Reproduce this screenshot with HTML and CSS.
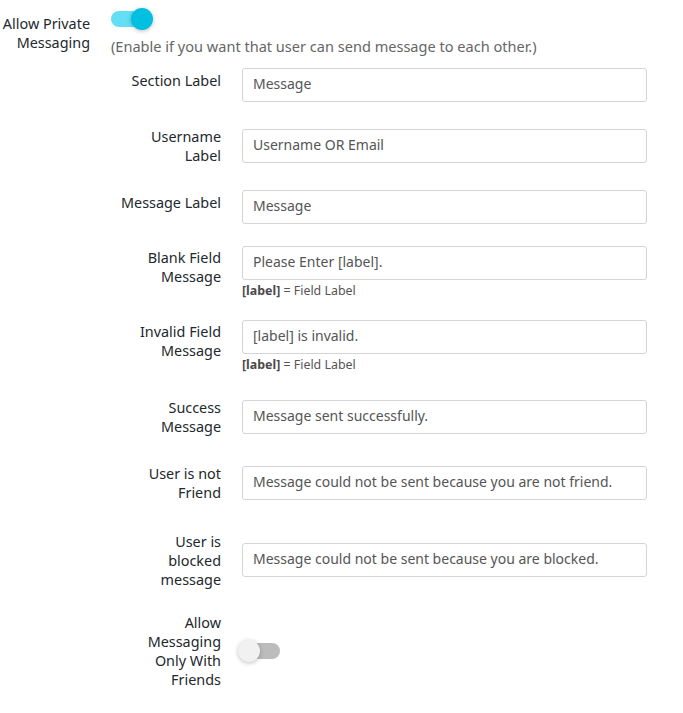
FILE: index.html
```html
<!DOCTYPE html>
<html lang="en">
<head>
<meta charset="utf-8">
<title>Private Messaging Settings</title>
<link rel="stylesheet" href="styles.css">
</head>
<body>
<div class="setting">
  <div class="setting-label">Allow Private Messaging</div>
  <div class="setting-body">
    <div class="toggle on"><span class="track"></span><span class="knob"></span></div>
    <p class="desc">(Enable if you want that user can send message to each other.)</p>

    <div class="fields">
      <div class="row">
        <label class="label">Section Label</label>
        <input class="input" type="text" value="Message">
      </div>
      <div class="row">
        <label class="label">Username Label</label>
        <input class="input" type="text" value="Username OR Email">
      </div>
      <div class="row gap-s">
        <label class="label">Message Label</label>
        <input class="input" type="text" value="Message">
      </div>
      <div class="row hinted gap-xs">
        <label class="label">Blank Field Message</label>
        <div class="field">
          <input class="input" type="text" value="Please Enter [label].">
          <div class="hint"><b>[label]</b> = Field Label</div>
        </div>
      </div>
      <div class="row hinted">
        <label class="label">Invalid Field Message</label>
        <div class="field">
          <input class="input" type="text" value="[label] is invalid.">
          <div class="hint"><b>[label]</b> = Field Label</div>
        </div>
      </div>
      <div class="row gap-l">
        <label class="label">Success Message</label>
        <input class="input" type="text" value="Message sent successfully.">
      </div>
      <div class="row gap-xl">
        <label class="label">User is not Friend</label>
        <input class="input" type="text" value="Message could not be sent because you are not friend.">
      </div>
      <div class="row gap-m">
        <label class="label">User is blocked message</label>
        <input class="input" type="text" value="Message could not be sent because you are blocked.">
      </div>
      <div class="row">
        <label class="label">Allow Messaging Only With Friends</label>
        <div class="field">
          <div class="toggle off"><span class="track"></span><span class="knob"></span></div>
        </div>
      </div>
    </div>
  </div>
</div>
</body>
</html>
```

FILE: styles.css
```css
* { box-sizing: border-box; }

body {
  margin: 0;
  background: #ffffff;
  font-family: "Noto Sans", "Open Sans", sans-serif;
  font-size: 14.4px;
  line-height: 19px;
  color: #23282d;
}

.setting {
  display: grid;
  grid-template-columns: 90px 1fr;
  column-gap: 21px;
}

.setting-label {
  text-align: right;
  margin-top: 14px;
}

.setting-body {
  padding-top: 8px;
}

.toggle {
  position: relative;
  height: 22px;
  width: 42px;
}

.toggle .track {
  position: absolute;
  top: 3px;
  width: 35px;
  height: 16px;
  border-radius: 8px;
}

.toggle .knob {
  position: absolute;
  top: 0;
  width: 22px;
  height: 22px;
  border-radius: 50%;
  box-shadow: 0 1px 4px rgba(0, 0, 0, 0.25);
}

.toggle.on .track { left: 0; background: #62dff5; }
.toggle.on .knob { left: 20px; background: #00c0e2; }

.toggle.off { margin-left: -4px; width: 44px; }
.toggle.off .track { left: 7px; background: #bcbcbc; }
.toggle.off .knob { left: 0; background: #f1f1f1; }

.desc {
  margin: 7px 0 0;
  font-size: 14.55px;
  color: #666666;
}

.fields {
  margin-top: 12px;
  padding-left: 9px;
}

.row {
  display: grid;
  grid-template-columns: 101px 405px;
  column-gap: 21px;
  align-items: center;
  margin-bottom: 25px;
}

.row.gap-s { margin-bottom: 22px; }
.row.gap-xs { margin-bottom: 21px; }
.row.gap-l { margin-bottom: 28px; }
.row.gap-xl { margin-bottom: 29.5px; }
.row.gap-m { margin-bottom: 24.5px; }

.label {
  text-align: right;
  min-height: 29px;
  align-self: center;
}

.row.hinted { align-items: start; }
.row.hinted .label { align-self: start; margin-top: 2px; }

.input {
  display: block;
  width: 405px;
  height: 34px;
  padding: 0 10px 3px;
  border: 1px solid #d4d4d4;
  border-radius: 3px;
  font-family: inherit;
  font-size: 14px;
  color: #555555;
  background: #ffffff;
  outline: none;
}

.hint {
  margin-top: 3px;
  font-size: 12.4px;
  line-height: 16px;
  color: #555555;
}

.hint b { font-weight: 700; color: #4a4a4a; }
```
